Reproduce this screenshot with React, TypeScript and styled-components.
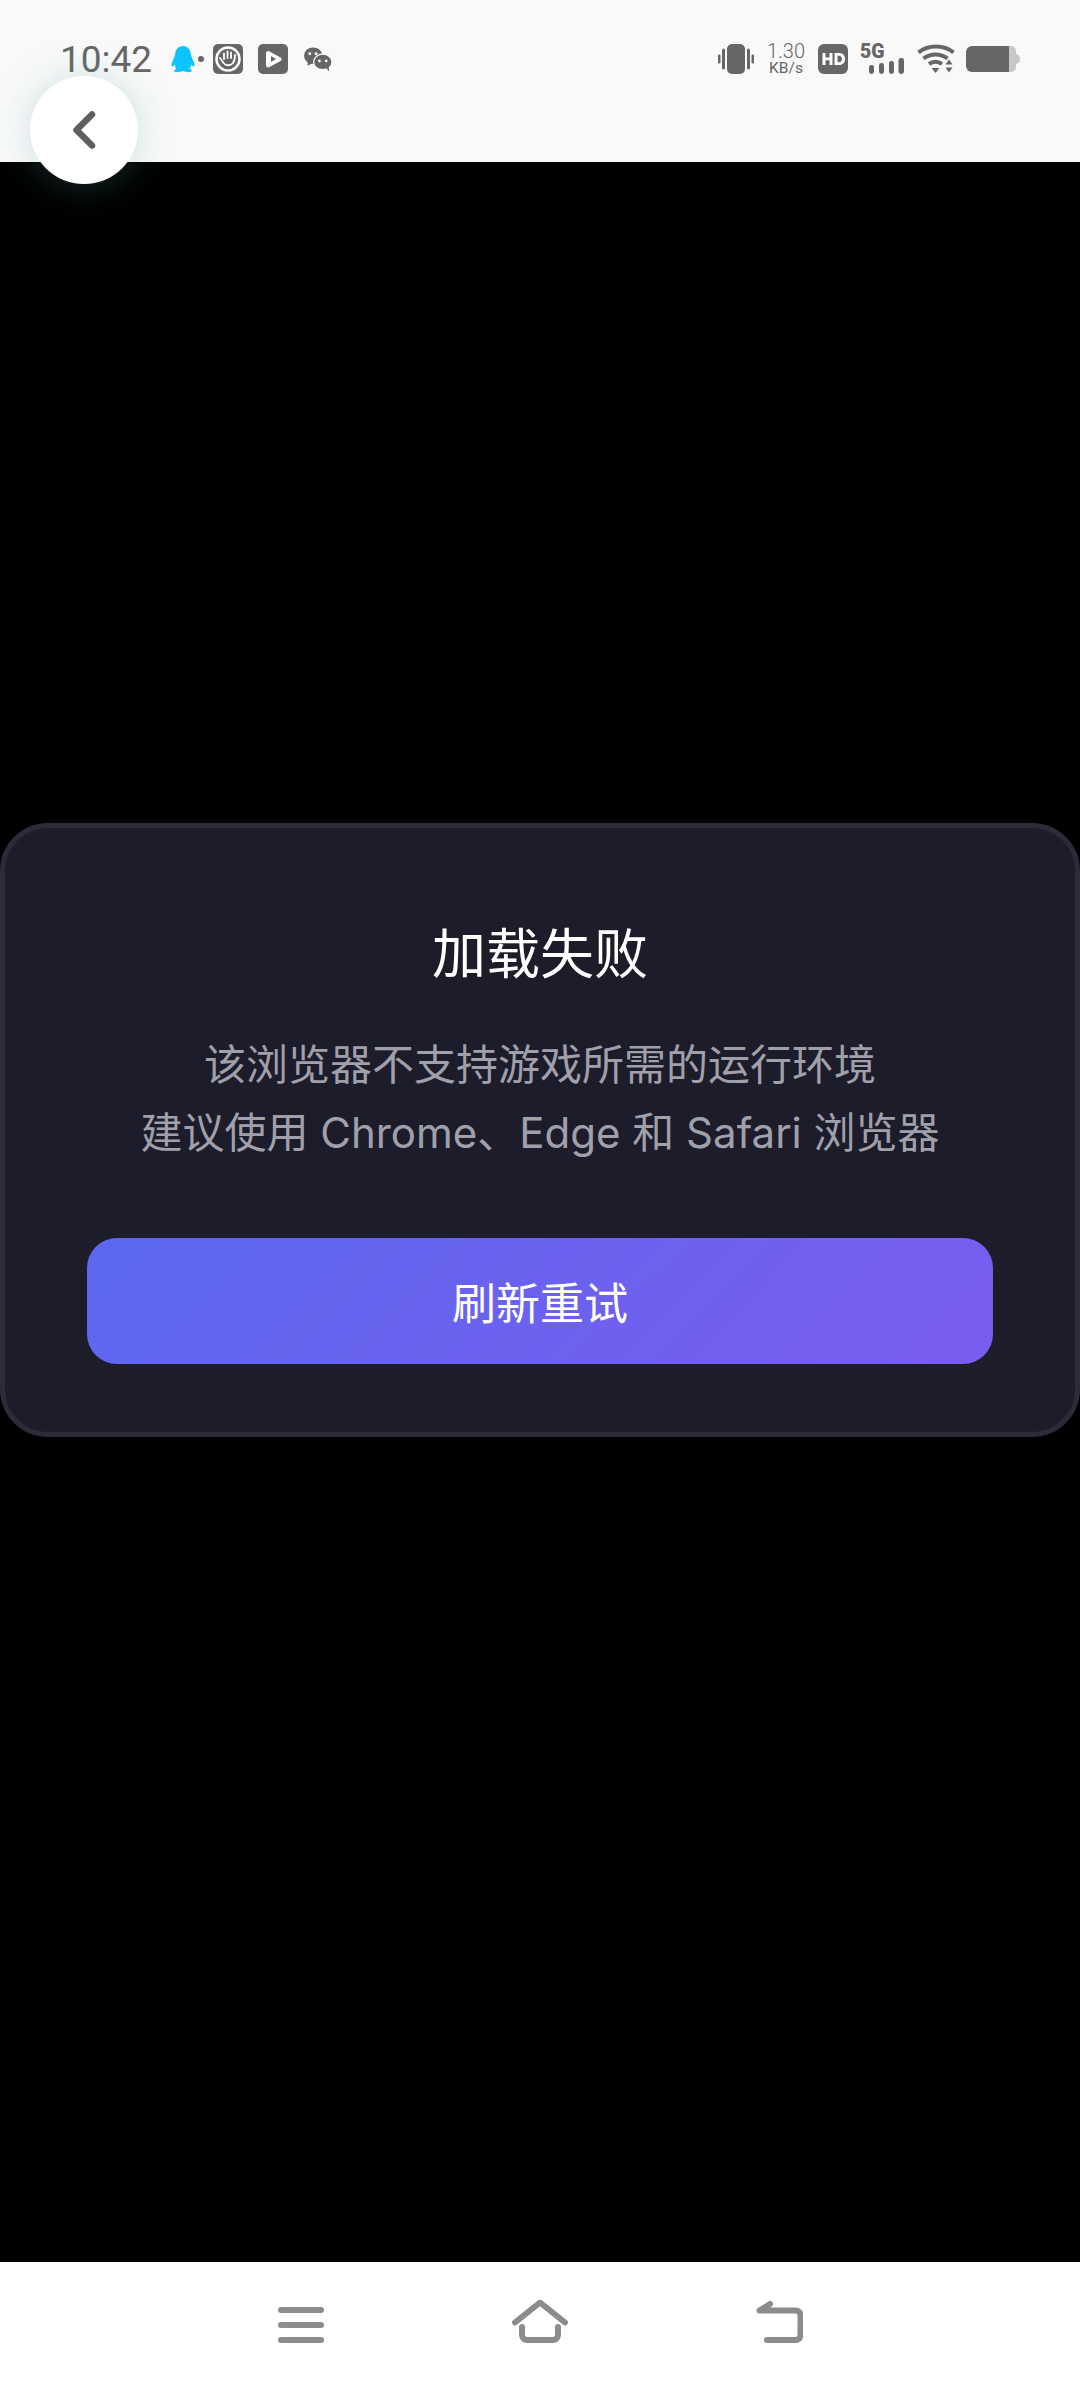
import styled, { createGlobalStyle } from "styled-components";

const GlobalStyle = createGlobalStyle`
	html, body {
		margin: 0;
		padding: 0;
		background: #000;
	}
	* {
		box-sizing: border-box;
	}
`;

const Page = styled.div`
	position: relative;
	width: 1080px;
	height: 2388px;
	display: flex;
	flex-direction: column;
	overflow: hidden;
	font-family: Inter, "Noto Sans CJK SC", sans-serif;
`;

const StatusBar = styled.div`
	height: 162px;
	flex: none;
	background: #f9f9f9;
	color: #666;
	display: flex;
	align-items: flex-start;
	justify-content: space-between;
	padding: 44px 60px 0 60px;
`;

const StatusGroup = styled.div`
	display: flex;
	align-items: center;
	height: 30px;
`;

const Time = styled.span`
	font-family: Roboto, sans-serif;
	font-size: 37px;
	font-weight: 400;
	line-height: 30px;
	margin-right: 18px;
	padding-top: 1px;
`;

const StatusIcon = styled.svg<{ $gap?: number }>`
	display: block;
	flex: none;
	margin-right: ${({ $gap }) => $gap ?? 0}px;
`;

const Speed = styled.div`
	display: flex;
	flex-direction: column;
	align-items: center;
	width: 38px;
	margin: 0 13px;
	font-family: Roboto, sans-serif;
	font-weight: 300;
	color: #666;
`;

const SpeedValue = styled.span`
	font-size: 20px;
	line-height: 17px;
`;

const SpeedUnit = styled.span`
	font-size: 15.5px;
	line-height: 14px;
	margin-top: 1px;
	font-weight: 400;
`;

const Signal = styled.div`
	position: relative;
	width: 44px;
	height: 30px;
	margin-right: 13px;
`;

const NetworkLabel = styled.span`
	position: absolute;
	left: 0;
	top: -2px;
	font-family: Roboto, sans-serif;
	font-size: 19.5px;
	font-weight: 900;
	line-height: 20px;
	color: #666;
`;

const BackButton = styled.button`
	position: absolute;
	left: 30px;
	top: 76px;
	width: 108px;
	height: 108px;
	border: none;
	padding: 0;
	border-radius: 50%;
	background: #fff;
	box-shadow: 0 0 36px rgba(90, 170, 170, 0.28);
	display: flex;
	align-items: center;
	justify-content: center;
`;

const Main = styled.main`
	flex: 1;
	background: #000;
	padding-top: 661px;
`;

const Card = styled.section`
	height: 614px;
	background: #1c1c2a;
	border: 5px solid #2b2b39;
	border-radius: 48px;
	padding: 0 82px;
	display: flex;
	flex-direction: column;
	align-items: center;
`;

const Title = styled.h1`
	margin: 91px 0 0;
	font-size: 54px;
	line-height: 72px;
	font-weight: 400;
	color: #fff;
`;

const Description = styled.p`
	margin: 40px 0 0;
	font-size: 42px;
	line-height: 68px;
	font-weight: 400;
	color: #a0a0aa;
	text-align: center;
	white-space: nowrap;
`;

const RetryButton = styled.button`
	width: 100%;
	height: 126px;
	margin-top: 71px;
	border: none;
	border-radius: 30px;
	background: linear-gradient(135deg, #5c68ef, #7a5cf0);
	color: #fff;
	font-family: inherit;
	font-size: 44px;
	font-weight: 400;
`;

const NavBar = styled.nav`
	height: 126px;
	flex: none;
	background: #fff;
	display: flex;
	align-items: flex-end;
	justify-content: center;
	gap: 188px;
	padding-bottom: 45px;
`;

const NavIcon = styled.svg`
	display: block;
	stroke: #8c8c8c;
	stroke-width: 6;
	stroke-linecap: round;
	stroke-linejoin: round;
	fill: none;
`;

export default function App() {
	return (
		<Page>
			<GlobalStyle />
			<StatusBar>
				<StatusGroup>
					<Time>10:42</Time>
					{/* QQ */}
					<StatusIcon width="26" height="28" viewBox="0 0 28 30" $gap={2}>
						<path
							d="M14 1c-5.500 0-8 4-8.500 9-.3 3-2 5-3.500 9-1 3 0 4.500 1 4 1-.3 1.500-1 2-2 .3 2 1 3.500 2 4.500-2 .7-3 1.500-2 3 1 1 6 1 9-.5 3 1.500 8 1.500 9 .5 1-1.500 0-2.300-2-3 1-1 1.700-2.500 2-4.500.5 1 1 1.700 2 2 1 .5 2-1 1-4-1.500-4-3.200-6-3.500-9C22 5 19.500 1 14 1z"
							fill="#0cc4fb"
						/>
					</StatusIcon>
					<StatusIcon width="6" height="6" viewBox="0 0 6 6" $gap={9}>
						<circle cx="3" cy="3" r="3" fill="#666" />
					</StatusIcon>
					{/* hand */}
					<StatusIcon width="30" height="30" viewBox="0 0 30 30" $gap={15}>
						<rect width="30" height="30" rx="5" fill="#666" />
						<circle cx="15" cy="15" r="11.500" fill="none" stroke="#fff" strokeWidth="2.500" />
						<path
							d="M7 14l3.500 5c2.500 3 7 3 9.500 0 1.500-2 2-5 2-8M11 15V9.500M14.500 14V7.500M18 14V8.500"
							fill="none"
							stroke="#fff"
							strokeWidth="1.800"
							strokeLinecap="round"
						/>
					</StatusIcon>
					{/* video */}
					<StatusIcon width="30" height="30" viewBox="0 0 30 30" $gap={16}>
						<rect width="30" height="30" rx="5" fill="#666" />
						<path
							d="M8 9.500C8 7.500 9.500 6.500 11.500 7.500l11 6c1.500 1 1.500 2.500 0 3.500l-11 6C9.500 24 8 23 8 21z"
							fill="#fff"
						/>
						<path d="M13 12v6l5-3z" fill="#666" />
					</StatusIcon>
					{/* wechat */}
					<StatusIcon width="28" height="25" viewBox="0 0 29 25">
						<ellipse cx="9.500" cy="8.500" rx="9.500" ry="8.500" fill="#666" />
						<path d="M4 14l-.5 5 6-3z" fill="#666" />
						<ellipse cx="19.500" cy="15" rx="9.500" ry="8" fill="#666" stroke="#f9f9f9" strokeWidth="1.200" />
						<path d="M23 21l3 4-.5-6z" fill="#666" />
						<circle cx="6" cy="6.500" r="1.500" fill="#f9f9f9" />
						<circle cx="12.500" cy="6.500" r="1.500" fill="#f9f9f9" />
						<circle cx="16" cy="14" r="1.400" fill="#f9f9f9" />
						<circle cx="23" cy="14" r="1.400" fill="#f9f9f9" />
					</StatusIcon>
				</StatusGroup>
				<StatusGroup>
					{/* vibrate */}
					<StatusIcon width="36" height="30" viewBox="0 0 36 30">
						<rect x="9" y="0" width="18" height="30" rx="5" fill="#666" />
						<rect x="4" y="4.500" width="3" height="21" rx="1.500" fill="#666" />
						<rect x="29" y="4.500" width="3" height="21" rx="1.500" fill="#666" />
						<rect x="0" y="10.500" width="2.500" height="9" rx="1.200" fill="#666" />
						<rect x="33.500" y="10.500" width="2.500" height="9" rx="1.200" fill="#666" />
					</StatusIcon>
					<Speed>
						<SpeedValue>1.30</SpeedValue>
						<SpeedUnit>KB/s</SpeedUnit>
					</Speed>
					{/* HD */}
					<StatusIcon width="30" height="30" viewBox="0 0 30 30" $gap={12}>
						<rect width="30" height="30" rx="6" fill="#666" />
						<path
							d="M4.500 9h3v4.500h4V9h3v12h-3v-4.800h-4V21h-3zM16.500 9h4.500c4 0 6 2.500 6 6s-2 6-6 6h-4.500zM19.500 11.700v6.600h1.300c2 0 3.100-1.300 3.100-3.300s-1.100-3.300-3.100-3.300z"
							fill="#fff"
						/>
					</StatusIcon>
					<Signal>
						<NetworkLabel>5G</NetworkLabel>
						<StatusIcon width="44" height="30" viewBox="0 0 44 30">
							<rect x="9" y="21" width="5" height="9" rx="2.400" fill="#666" />
							<rect x="19" y="19" width="5" height="11" rx="2.400" fill="#666" />
							<rect x="29" y="17" width="5" height="13" rx="2.400" fill="#666" />
							<rect x="38.500" y="14" width="5.500" height="16" rx="2.400" fill="#666" />
						</StatusIcon>
					</Signal>
					{/* wifi */}
					<StatusIcon width="38" height="30" viewBox="0 0 38 30" $gap={11}>
						<path d="M1.500 8.500c9.500-8 25.500-8 35 0" fill="none" stroke="#666" strokeWidth="4" />
						<path d="M6.500 14.500c7-5.500 17-5.500 24 0" fill="none" stroke="#666" strokeWidth="4" />
						<path d="M12 20c4-2.800 9-2.800 13 0" fill="none" stroke="#666" strokeWidth="4" />
						<path d="M14.500 24h8l-4 5z" fill="#666" />
						<path d="M32 15.500l3.500 5h-7z" fill="#666" />
						<path d="M28.500 23.500h7l-3.500 5z" fill="#666" />
					</StatusIcon>
					{/* battery */}
					<StatusIcon width="54" height="26" viewBox="0 0 54 26">
						<path d="M6 0h37v26H6a6 6 0 0 1-6-6V6a6 6 0 0 1 6-6z" fill="#666" />
						<path d="M43 0h2a5 5 0 0 1 5 5v16a5 5 0 0 1-5 5h-2z" fill="#c8c8c8" />
						<path d="M50 8c3 .5 4 2.500 4 5s-1 4.500-4 5z" fill="#c8c8c8" />
					</StatusIcon>
				</StatusGroup>
			</StatusBar>

			<BackButton aria-label="返回">
				<svg width="24" height="38" viewBox="0 0 24 38" fill="none">
					<path d="M20 3.500 4.500 19 20 34.500" stroke="#5f5f5f" strokeWidth="6.500" strokeLinecap="round" strokeLinejoin="round" />
				</svg>
			</BackButton>

			<Main>
				<Card>
					<Title>加载失败</Title>
					<Description>
						该浏览器不支持游戏所需的运行环境
						<br />
						建议使用 Chrome、Edge 和 Safari 浏览器
					</Description>
					<RetryButton>刷新重试</RetryButton>
				</Card>
			</Main>

			<NavBar>
				<NavIcon width="46" height="36" viewBox="0 0 46 36">
					<path d="M3 3h40M3 18h40M3 33h40" />
				</NavIcon>
				<NavIcon width="56" height="43" viewBox="0 0 56 43">
					<path d="M3 22.500 28 2.500l25 20" />
					<path d="M10 27v7.500c0 3.500 2 5.500 5.500 5.500h25c3.500 0 5.500-2 5.500-5.500V27" />
				</NavIcon>
				<NavIcon width="47" height="42" viewBox="0 0 47 42">
					<path d="M11 39h28.500c3 0 5-2 5-5V14.500c0-3-2-5-5-5H3.500L14 3" />
				</NavIcon>
			</NavBar>
		</Page>
	);
}
